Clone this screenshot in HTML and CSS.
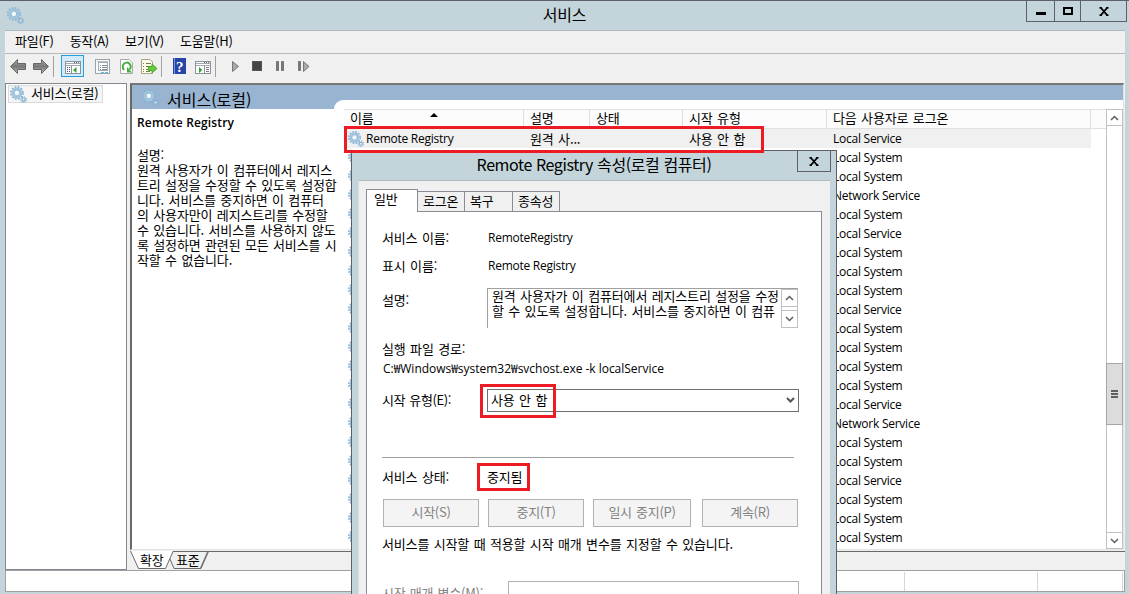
FILE: index.html
```
<!DOCTYPE html>
<html lang="ko">
<head>
  <meta charset="UTF-8" />
  <title>서비스</title>
  <link rel="stylesheet" href="styles.css">
</head>
<body>
  <svg class="defs">
    <symbol id="gear" viewBox="0 0 16 16">
      <circle cx="6.5" cy="6.5" r="5.7" fill="none" stroke="#86b2d2" stroke-width="1.6" stroke-dasharray="1.7 1.3"/>
      <circle cx="6.5" cy="6.5" r="3.9" fill="none" stroke="#a0c5df" stroke-width="2.5"/>
      <circle cx="6.5" cy="6.5" r="2.7" fill="#f0f6fa" stroke="#7fa9c8" stroke-width=".7"/>
      <circle cx="12.8" cy="12.8" r="2.6" fill="none" stroke="#86b2d2" stroke-width="1.3" stroke-dasharray="1.1 .9"/>
      <circle cx="12.8" cy="12.8" r="1.5" fill="#e2eff7" stroke="#8ab3cf" stroke-width="1.1"/>
    </symbol>
    <symbol id="up" viewBox="0 0 9 6"><path d="M1 5 4.5 1.5 8 5" fill="none" stroke="#606060" stroke-width="1.5"/></symbol>
    <symbol id="down" viewBox="0 0 9 6"><path d="M1 1 4.5 4.5 8 1" fill="none" stroke="#606060" stroke-width="1.5"/></symbol>
    <symbol id="close" viewBox="0 0 10 9"><path d="M.5 .7h2.5M7 .7h2.5M.5 8.300h2.500M7 8.300h2.500M2 1 8 8M8 1 2 8" fill="none" stroke="#000" stroke-width="1.900"/></symbol>
  </svg>

  <div class="window">
    <!-- Title bar -->
    <div class="titlebar">
      <svg class="title-icon" width="17" height="17"><use href="#gear"/></svg>
      <div class="title">서비스</div>
      <div class="win-buttons">
        <span class="wb min"><i></i></span>
        <span class="wb max"><i></i></span>
        <span class="wb x"><svg width="10" height="9"><use href="#close"/></svg></span>
      </div>
    </div>

    <div class="client">
      <div class="menu"><span>파일(F)</span><span>동작(A)</span><span>보기(V)</span><span>도움말(H)</span></div>

      <!-- Toolbar -->
      <div class="toolbar">
        <svg width="1100" height="29" viewBox="5 54 1100 29">
          <defs>
            <linearGradient id="gray" x1="0" y1="0" x2="0" y2="1"><stop offset="0" stop-color="#aaa"/><stop offset=".5" stop-color="#777"/><stop offset="1" stop-color="#bbb"/></linearGradient>
          </defs>
          <path d="M10.5 66.5 17.5 59.5V63.5H25.5V69.5H17.5V73.5Z" fill="url(#gray)" stroke="#666"/>
          <path d="M48.5 66.5 41.5 59.5V63.5H33.5V69.5H41.5V73.5Z" fill="url(#gray)" stroke="#666"/>
          <path d="M53.5 56V77M161.5 56V77M215.5 56V77" stroke="#a0a0a0"/>
          <rect x="61.5" y="55.5" width="22" height="21" fill="#d2eafa" stroke="#26a0da"/>
          <rect x="65.5" y="61.5" width="15" height="12" fill="#fff" stroke="#8b929b"/>
          <path d="M66 63.5H80M66 65.5H80" stroke="#a2a9b3"/>
          <path d="M74 62.5h1M76 62.5h1M78 62.5h1" stroke="#667"/>
          <path d="M71.5 66V73" stroke="#8b929b"/>
          <path d="M67 67.5h1M69 67.5h1M67 69.5h1M69 69.5h1M67 71.5h1M69 71.5h1" stroke="#456"/>
          <path d="M76.5 67V73L73 70Z" fill="#32a632"/>
          <rect x="95.5" y="59.5" width="14" height="14" fill="#f8f9fa" stroke="#9ba2aa"/>
          <rect x="98.5" y="62.5" width="9" height="8" fill="#fff" stroke="#a4aab1"/>
          <path d="M97 61.5H108" stroke="#b9c0c8"/><path d="M100 65.5h1M102 65.5h5M100 67.5h1M102 67.5h5M100 69.5h1M102 69.5h5" stroke="#7f8994"/>
          <path d="M101 72.5h3M105 72.5h3" stroke="#65b5de"/>
          <path d="M120.5 59.5H129L132.5 63V73.5H120.5Z" fill="#fff" stroke="#a5aaa5"/>
          <path d="M124.300 69.800A4 4 0 1 1 129.500 69.500" fill="none" stroke="#43ad3f" stroke-width="2"/>
          <path d="M127 67V72.500H132Z" fill="#43ad3f"/>
          <path d="M141.5 59.5H150L152.5 62V73.5H141.5Z" fill="#fffce6" stroke="#a6a494"/>
          <path d="M143 63.5h1M146 63.5h5M143 66.5h1M146 66.5h5M143 69.5h1M146 69.5h4M143 71.5h1M146 71.5h4" stroke="#79775e"/>
          <path d="M148.5 66.5H152V64L157 68.5 152 73V70.5H148.5Z" fill="#66cb3b" stroke="#48a928"/>
          <rect x="173" y="58" width="13" height="16" fill="#2745a8"/><path d="M174.5 58V74" stroke="#7896dd"/>
          <text x="176" y="71.5" class="help">?</text>
          <rect x="195.5" y="61.5" width="15" height="12" fill="#fff" stroke="#8b929b"/>
          <path d="M196 63.5H210M196 65.5H210" stroke="#a2a9b3"/><path d="M204 62.5h1M206 62.5h1M208 62.5h1" stroke="#667"/>
          <path d="M204.5 66V73" stroke="#8b929b"/><path d="M206 67.5h3M206 69.5h3M206 71.5h3" stroke="#778"/>
          <path d="M199 67V73L202.5 70Z" fill="#32a632"/>
          <path d="M232.5 61.5 238.5 66.5 232.5 71.5Z" fill="#aaa" stroke="#777"/>
          <rect x="252.5" y="61.5" width="9" height="9" fill="#444" stroke="#555"/>
          <path d="M276.5 61.5h2v9h-2zM281.5 61.5h2v9h-2zM298.5 61.5h2v9h-2z" fill="#777" stroke="#777"/>
          <path d="M303.5 61.5 309 66.5 303.5 71.5Z" fill="#aaa" stroke="#777"/>
        </svg>
      </div>

      <div class="panes">
        <div class="tree">
          <span class="node"><svg width="17" height="17"><use href="#gear"/></svg><span>서비스(로컬)</span></span>
        </div>

        <div class="main">
          <div class="pane">
            <div class="banner"><svg width="17" height="17"><use href="#gear"/></svg>서비스(로컬)</div>
            <div class="body">
              <div class="info">
                <b class="en">Remote Registry</b>
                <p>설명:<br>원격 사용자가 이 컴퓨터에서 레지스<br>트리 설정을 수정할 수 있도록 설정합<br>니다. 서비스를 중지하면 이 컴퓨터<br>의 사용자만이 레지스트리를 수정할<br>수 있습니다. 서비스를 사용하지 않도<br>록 설정하면 관련된 모든 서비스를 시<br>작할 수 없습니다.</p>
              </div>
              <div class="list">
                <div class="head row">
                  <span>이름</span><span>설명</span><span>상태</span><span>시작 유형</span><span>다음 사용자로 로그온</span>
                  <i class="sort"></i>
                </div>
                <div id="rows"></div>
              </div>
              <div class="scroll">
                <span class="arrow"><svg width="9" height="6"><use href="#up"/></svg></span>
                <span class="thumb"><i></i><i></i><i></i></span>
                <span class="arrow end"><svg width="9" height="6"><use href="#down"/></svg></span>
              </div>
            </div>
          </div>
          <div class="view-tabs">
            <svg width="90" height="19" viewBox="0 0 90 19">
              <path d="M0 0H43L36 17.5H8.5Z" fill="#fff"/>
              <path d="M.5 0 8.5 17.5H35.5L43 .5H78.5L71 17.5H44L40 8" fill="none" stroke="#696969"/>
              <path d="M77.5 1 70.5 17" stroke="#696969"/>
            </svg>
            <span class="vt first">확장</span><span class="vt">표준</span>
          </div>
        </div>
      </div>
      <div class="status"><span></span><span></span><span></span></div>
    </div>
  </div>

  <!-- Properties dialog -->
  <div class="dialog">
    <div class="dlg-title"><span>Remote Registry 속성(로컬 컴퓨터)</span><i class="dlg-close"><svg width="10" height="9"><use href="#close"/></svg></i></div>
    <div class="dlg-body">
      <div class="tabs"><span class="on">일반</span><span>로그온</span><span>복구</span><span>종속성</span></div>
      <div class="page">
        <div class="field"><label>서비스 이름:</label><span class="en">RemoteRegistry</span></div>
        <div class="field"><label>표시 이름:</label><span class="en">Remote Registry</span></div>
        <div class="field desc">
          <label>설명:</label>
          <div class="textarea">
            <p>원격 사용자가 이 컴퓨터에서 레지스트리 설정을 수정<br>할 수 있도록 설정합니다. 서비스를 중지하면 이 컴퓨</p>
            <div class="mini-scroll"><span><svg width="9" height="6"><use href="#up"/></svg></span><span><svg width="9" height="6"><use href="#down"/></svg></span></div>
          </div>
        </div>
        <div class="path-label">실행 파일 경로:</div>
        <div class="path en">C:₩Windows₩system32₩svchost.exe -k localService</div>
        <div class="field startup"><label>시작 유형(E):</label><div class="select"><span>사용 안 함</span><svg width="9" height="6" viewBox="0 0 9 6"><path d="M1 1 4.5 4.5 8 1" fill="none" stroke="#555" stroke-width="2"/></svg></div></div>
        <hr>
        <div class="field state"><label>서비스 상태:</label><span>중지됨</span></div>
        <div class="buttons"><button disabled>시작(S)</button><button disabled>중지(T)</button><button disabled>일시 중지(P)</button><button disabled>계속(R)</button></div>
        <div class="hint">서비스를 시작할 때 적용할 시작 매개 변수를 지정할 수 있습니다.</div>
        <div class="params"><label>시작 매개 변수(M):</label><div class="input"></div></div>
      </div>
    </div>
  </div>

  <!-- Highlights -->
  <div class="mark mark-row"></div>
  <div class="mark mark-type"></div>
  <div class="mark mark-state"></div>

  <script>
    const accounts = [
      "Local Service", "Local System", "Local System", "Network Service", "Local System", "Local Service",
      "Local System", "Local System", "Local System", "Local Service", "Local System", "Local System",
      "Local System", "Local System", "Local Service", "Network Service", "Local System", "Local System",
      "Local Service", "Local System", "Local System", "Local System"
    ];
    const gear = '<svg width="16" height="16"><use href="#gear"/></svg>';
    document.getElementById("rows").innerHTML = accounts.map((a, i) => `
      <div class="row${i === 0 ? " selected" : ""}">
        <span class="name en">${gear}${i === 0 ? "Remote Registry" : ""}</span>
        <span>${i === 0 ? "원격 사..." : ""}</span><span></span>
        <span>${i === 0 ? "사용 안 함" : ""}</span><span class="en">${a}</span>
      </div>`).join("");
  </script>
</body>
</html>
```
FILE: styles.css
```
* { box-sizing: border-box; }
body { margin: 0; width: 1129px; height: 594px; overflow: hidden; position: relative; background: #c3d5da; color: #000; font: 13px/15px "Noto Sans CJK KR", sans-serif; letter-spacing: -0.15px; word-spacing: 1px; white-space: nowrap; }
p { margin: 0; }
i { font-style: normal; }
svg { display: block; flex: none; }
.defs { position: absolute; width: 0; height: 0; }
.en { font-family: "Open Sans", "Noto Sans CJK KR", sans-serif; font-size: 12px; letter-spacing: -0.25px; word-spacing: 0; }

.window { height: 594px; border-top: 1px solid #5d606b; padding: 0 4px 0 5px; }
.titlebar { height: 29px; display: grid; grid-template-columns: 110px 1fr 110px; }
.title-icon { margin: 6px 0 0 2px; }
.title { text-align: center; font-size: 16px; line-height: 26px; padding-right: 1px; }
.win-buttons { display: flex; justify-content: flex-end; height: 21px; margin-right: -2px; }
.wb { border: 1px solid #5d606b; border-top: 0; margin-left: -1px; display: flex; align-items: center; justify-content: center; flex: none; }
.min { width: 29px; }
.max { width: 27px; }
.x { width: 47px; }
.min i { width: 10px; height: 3px; background: #000; margin-top: 5px; }
.max i { width: 10px; height: 8px; border: 2px solid #000; }

.client { height: 562px; background: #f0f0f0; border-top: 1px solid #b1b9c0; }
.menu { height: 23px; border-bottom: 1px solid #b4b7bd; display: flex; padding: 2px 10px; gap: 16px; letter-spacing: -0.25px; }
.toolbar { height: 29px; }
.help { font: bold 15px "Liberation Serif", serif; fill: #fff; }
.panes { display: flex; height: 487px; gap: 3px; }
.tree { width: 122px; background: #fff; border: 1px solid #828790; padding: 1px 2px; }
.node { display: inline-flex; align-items: center; height: 18px; width: 95px; gap: 4px; border: 1px solid #dadada; background: #f5f5f5; padding-left: 1px; }
.node span { padding-bottom: 3px; }

.main { flex: 1; min-width: 0; }
.pane { height: 467px; border: 2px solid #696969; border-top-color: #777; border-right: 1px solid #e3e3e3; border-bottom: 1px solid #e3e3e3; background: #fff; margin-right: 1px; }
.banner { height: 24px; background: #99b4d1; display: flex; align-items: center; gap: 8px; padding: 4px 0 0 10px; font-size: 16px; letter-spacing: 0; }
.banner svg { margin-top: -3px; }
.body { display: flex; height: 440px; position: relative; }
/* rounded corner of the extended view rising into the banner */
.body::before { content: ""; position: absolute; left: 202px; right: 0; top: -9px; height: 10px; background: #fff; border-top-left-radius: 9px; }
.info { width: 212px; padding: 5px 0 0 5px; flex: none; }
.info p { letter-spacing: -0.15px; }
.info b { display: block; font-size: 12px; letter-spacing: 0.15px; font-weight: 600; height: 33px; line-height: 17px; }
.list { width: 762px; flex: none; position: relative; }
.row { display: grid; grid-template-columns: 180px 66px 93px 144px 264px; height: 19px; align-items: center; }
.row > span { padding-left: 6px; height: 19px; line-height: 19px; }
.head { background: #fcfcfc; border-bottom: 1px solid #e0e0e0; border-top: 1px solid #e0e0e0; height: 20px; }
.head > span { border-right: 1px solid #dedede; height: 18px; line-height: 16px; }
.sort { position: absolute; left: 86px; top: 4px; border: 4px solid transparent; border-top: 0; border-bottom-color: #000; }
.row.selected { background: #f0f0f0; width: 747px; }
.row .name { display: flex; align-items: center; gap: 2px; padding-left: 4px; }
.scroll { width: 17px; height: 440px; border: 1px solid #c1c1c1; display: flex; flex-direction: column; position: relative; background: #fff; }
.arrow { height: 16px; border-bottom: 1px solid #c1c1c1; display: flex; align-items: center; justify-content: center; flex: none; }
.arrow.end { margin-top: auto; border-top: 1px solid #c1c1c1; border-bottom: 0; }
.thumb { margin: 237px -1px 0; height: 62px; background: #dcdcdc; border: 1px solid #a6a6a6; display: flex; flex-direction: column; align-items: center; justify-content: center; gap: 1px; }
.thumb i { width: 7px; height: 2px; background: #606060; }

.view-tabs { height: 19px; border-top: 1px solid #696969; margin-top: 1px; position: relative; }
.view-tabs svg { margin-top: -1px; }
.vt { position: absolute; left: 46px; top: 0; }
.vt.first { left: 10px; }
.status { height: 22px; border: 1px solid #a0a0a0; background: #fff; display: flex; }
.status span { border-right: 1px solid #d7d7d7; margin-top: 1px; width: 133px; }
.status span:first-child { width: 899px; }
.status span:last-child { width: 85px; }

/* Properties dialog */
.dialog { position: absolute; left: 351px; top: 150px; width: 486px; height: 444px; overflow: hidden; background: #c3d5da; border: 1px solid #5d606b; border-bottom: 0; padding: 0 6px; }
.dlg-title { height: 29px; display: flex; justify-content: center; position: relative; font-size: 16px; line-height: 27px; letter-spacing: -0.4px; word-spacing: 0; }
.dlg-close { position: absolute; right: -1px; top: 0; width: 34px; height: 21px; border: 1px solid #5d606b; border-top: 0; display: flex; align-items: center; justify-content: center; }
.dlg-body { height: 414px; background: #f0f0f0; border-top: 1px solid #b1b9c0; border-left: 1px solid #d8dde0; padding: 8px 8px 0 7px; }
.tabs { display: flex; align-items: flex-end; height: 23px; }
.tabs span { height: 21px; border: 1px solid #898c95; border-right: 0; background: #f0f0f0; padding: 1px 5px; width: 48px; }
.tabs span:last-child { border-right: 1px solid #898c95; }
.tabs .on { height: 23px; width: 52px; border-right: 1px solid #898c95; border-bottom: 0; background: #fff; padding: 1px 7px; z-index: 1; }
.tabs .on + span { border-left: 0; width: 46px; }
.page { height: 400px; margin-top: -1px; background: #fff; border: 1px solid #898c95; padding: 11px 15px; }
.field { display: flex; align-items: center; height: 28px; }
.field label { width: 106px; flex: none; }
.desc { height: 57px; align-items: flex-start; padding-top: 9px; }
.desc label { padding-top: 4px; width: 105px; }
.textarea { width: 311px; height: 40px; border: 1px solid #a0a0a0; border-right: 0; border-bottom: 0; display: flex; justify-content: space-between; }
.textarea p { padding-left: 4px; margin-top: -1px; }
.mini-scroll { width: 17px; height: 39px; border: 1px solid #c1c1c1; display: flex; flex-direction: column; justify-content: space-between; }
.mini-scroll span { height: 17px; border-bottom: 1px solid #c1c1c1; display: flex; align-items: center; justify-content: center; }
.mini-scroll span + span { border-bottom: 0; border-top: 1px solid #c1c1c1; }
.path-label { height: 26px; line-height: 25px; }
.path { height: 15px; line-height: 13px; padding-left: 1px; letter-spacing: -0.02px; }
.startup { height: 24px; margin-top: 11px; }
.startup label { width: 104px; letter-spacing: -0.4px; padding-bottom: 1px; }
.select { width: 312px; height: 23px; border: 1px solid #707070; display: flex; align-items: center; justify-content: space-between; padding: 0 3px; margin-left: 1px; }
.select span { padding-bottom: 2px; }
hr { margin: 45px 12px 0 0; border: 0; border-top: 1px solid #a0a0a0; }
.state { height: 28px; margin-top: 4px; }
.state label { width: 105px; }
.buttons { display: flex; gap: 9px; margin: 9px 0 0 1px; }
.buttons button { width: 96px; height: 28px; padding: 0 0 3px; border: 1px solid #adb2b5; background: #f4f4f4; color: #838383; font: inherit; letter-spacing: -0.3px; word-spacing: 1px; flex: none; }
.buttons button:nth-child(3) { width: 98px; }
.buttons button:nth-child(4) { margin-left: 2px; }
.hint { height: 34px; line-height: 34px; letter-spacing: -0.15px; }
.params { display: flex; justify-content: space-between; margin: 20px 7px 0 0; }
.params label { color: #838383; padding-top: 4px; letter-spacing: -0.25px; }
.input { width: 291px; height: 23px; border: 1px solid #adb2b5; }

.mark { position: absolute; border: 3px solid #ed1c24; }
.mark-row { left: 344px; top: 126px; width: 420px; height: 27px; }
.mark-type { left: 480px; top: 384px; width: 76px; height: 34px; }
.mark-state { left: 477px; top: 463px; width: 53px; height: 28px; }
```
